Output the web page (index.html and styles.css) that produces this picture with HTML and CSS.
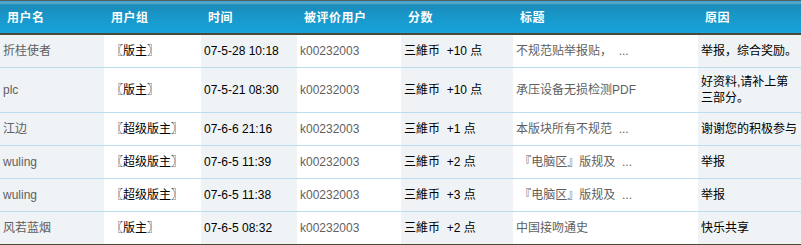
FILE: index.html
```html
<!DOCTYPE html>
<html lang="zh-CN">
<head>
<meta charset="utf-8">
<title>评分记录</title>
<link rel="stylesheet" href="styles.css">
</head>
<body>
<table class="log">
  <colgroup>
    <col class="c1"><col class="c2"><col class="c3"><col class="c4"><col class="c5"><col class="c6"><col class="c7">
  </colgroup>
  <thead>
    <tr>
      <th>用户名</th><th>用户组</th><th>时间</th><th>被评价用户</th><th>分数</th><th>标题</th><th>原因</th>
    </tr>
  </thead>
  <tbody>
    <tr>
      <td class="alt muted">折桂使者</td><td class="grp">〖版主〗</td><td class="alt">07-5-28 10:18</td><td class="muted">k00232003</td><td class="alt">三維币&nbsp;&nbsp;+10 点</td><td class="muted">不规范贴举报贴，&nbsp;&nbsp;...</td><td class="alt">举报，综合奖励。</td>
    </tr>
    <tr class="tall">
      <td class="alt muted">plc</td><td class="grp">〖版主〗</td><td class="alt">07-5-21 08:30</td><td class="muted">k00232003</td><td class="alt">三維币&nbsp;&nbsp;+10 点</td><td class="muted">承压设备无损检测PDF</td><td class="alt">好资料,请补上第<br>三部分。</td>
    </tr>
    <tr>
      <td class="alt muted">江边</td><td class="grp">〖超级版主〗</td><td class="alt">07-6-6 21:16</td><td class="muted">k00232003</td><td class="alt">三維币&nbsp;&nbsp;+1 点</td><td class="muted">本版块所有不规范&nbsp;&nbsp;...</td><td class="alt">谢谢您的积极参与</td>
    </tr>
    <tr>
      <td class="alt muted">wuling</td><td class="grp">〖超级版主〗</td><td class="alt">07-6-5 11:39</td><td class="muted">k00232003</td><td class="alt">三維币&nbsp;&nbsp;+2 点</td><td class="muted">&nbsp;『电脑区』版规及&nbsp;&nbsp;...</td><td class="alt">举报</td>
    </tr>
    <tr>
      <td class="alt muted">wuling</td><td class="grp">〖超级版主〗</td><td class="alt">07-6-5 11:38</td><td class="muted">k00232003</td><td class="alt">三維币&nbsp;&nbsp;+3 点</td><td class="muted">&nbsp;『电脑区』版规及&nbsp;&nbsp;...</td><td class="alt">举报</td>
    </tr>
    <tr class="last">
      <td class="alt muted">风若蓝烟</td><td class="grp">〖版主〗</td><td class="alt">07-6-5 08:32</td><td class="muted">k00232003</td><td class="alt">三維币&nbsp;&nbsp;+2 点</td><td class="muted">中国接吻通史</td><td class="alt">快乐共享</td>
    </tr>
  </tbody>
</table>
</body>
</html>
```

FILE: styles.css
```css
html, body {
  margin: 0;
  padding: 0;
  background: #ffffff;
}

body {
  font-family: "Liberation Sans", "Noto Sans CJK SC", sans-serif;
  font-size: 12px;
  color: #000;
}

.log {
  width: 801px;
  border-collapse: collapse;
  table-layout: fixed;
  border-top: 1px solid #55605f;
}

.c1 { width: 104px; }
.c2 { width: 97px; }
.c3 { width: 96px; }
.c4 { width: 104px; }
.c5 { width: 112px; }
.c6 { width: 185px; }
.c7 { width: 103px; }

.log th {
  height: 31px;
  padding: 0 0 1px 7px;
  text-align: left;
  font-weight: bold;
  font-size: 12px;
  color: #ffffff;
  letter-spacing: 0.5px;
  background: linear-gradient(to bottom, #5aa9c9 0px, #5aa9c9 2px, #1a8bb9 3px, #1897c9 15px, #17a2db 31px);
  border-bottom: 2px solid #4a4a36;
  vertical-align: middle;
}

.log td {
  height: 32px;
  padding: 0 3px;
  border-bottom: 1px solid #bcdcef;
  vertical-align: middle;
  white-space: nowrap;
  overflow: hidden;
  line-height: 16px;
}

.log tr.tall td {
  height: 44px;
}

.log tr.last td {
  border-bottom: 2px solid #4a4a36;
}

.log td.alt {
  background: #eff3f6;
}

.log td.muted {
  color: #5f5f5f;
}

.log td.grp {
  padding-left: 7px;
}
```
